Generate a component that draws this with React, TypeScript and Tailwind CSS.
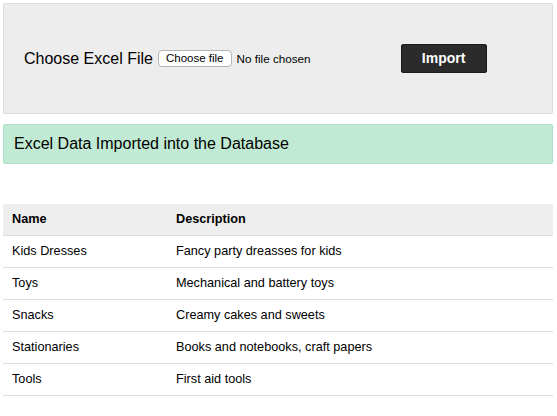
import React from 'react';

const rows = [
  { name: 'Kids Dresses', description: 'Fancy party dreasses for kids' },
  { name: 'Toys', description: 'Mechanical and battery toys' },
  { name: 'Snacks', description: 'Creamy cakes and sweets' },
  { name: 'Stationaries', description: 'Books and notebooks, craft papers' },
  { name: 'Tools', description: 'First aid tools' },
];

const App: React.FC = () => {
  return (
    <div className="min-h-screen bg-white pt-[3px] pl-[3px] pr-[4px] font-['Liberation_Sans',Arial,sans-serif] text-black">
      {/* upload form */}
      <div className="h-[111px] flex items-center pl-[20px] bg-[#ededed] border border-[#dcdcdc] rounded-[2px]">
        <label className="text-[16px] leading-none">Choose Excel File</label>
        <span className="ml-[5px] h-[17px] flex items-center px-[7px] bg-white border border-[#b4b4b4] rounded-[4px] text-[11.5px] leading-none">
          Choose file
        </span>
        <span className="ml-[5px] text-[11.7px] leading-none">No file chosen</span>
        <button className="ml-[90px] w-[86px] h-[29px] bg-[#2b2b2b] border border-[#1c1c1c] rounded-[2px] text-white text-[14px] font-bold">
          Import
        </button>
      </div>

      {/* success message */}
      <div className="mt-[10px] h-[40px] flex items-center pl-[10px] bg-[#c0ead3] border border-[#b0e0c5] rounded-[2px] text-[16px]">
        Excel Data Imported into the Database
      </div>

      {/* data table */}
      <div className="mt-[40px] text-[12.7px]">
        <div className="grid grid-cols-[164px_1fr] h-[32px] items-center bg-[#eeeeee] border-b border-[#dddddd] font-bold">
          <div className="pl-[9px]">Name</div>
          <div className="pl-[9px]">Description</div>
        </div>
        {rows.map((row) => (
          <div key={row.name} className="grid grid-cols-[164px_1fr] h-[32px] items-center border-b border-[#dddddd]">
            <div className="pl-[9px] pt-[1px]">{row.name}</div>
            <div className="pl-[9px] pt-[1px]">{row.description}</div>
          </div>
        ))}
      </div>
    </div>
  );
};

export default App;
